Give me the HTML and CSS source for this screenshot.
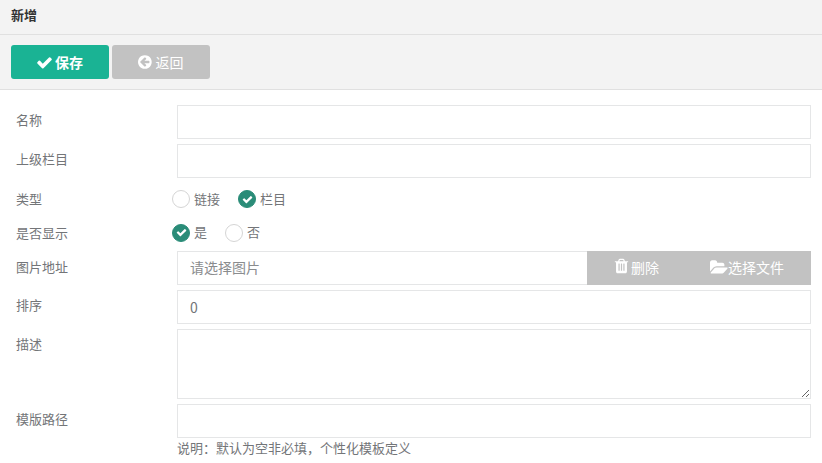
FILE: index.html
```html
<!DOCTYPE html>
<html lang="zh">
<head>
<meta charset="utf-8">
<title>新增</title>
<link rel="stylesheet" href="styles.css">
</head>
<body>
<header class="title-bar">新增</header>
<div class="toolbar">
  <button class="btn btn-save" type="button">
    <svg class="ic ic-check" viewBox="0 0 1792 1792"><path d="M1671 566q0 40-28 68l-724 724-136 136q-28 28-68 28t-68-28l-136-136-362-362q-28-28-28-68t28-68l136-136q28-28 68-28t68 28l294 295 656-657q28-28 68-28t68 28l136 136q28 28 28 68z"/></svg>保存
  </button>
  <button class="btn btn-back" type="button">
    <svg class="ic ic-back" viewBox="0 0 1792 1792"><path d="M1280 960v-128q0-26-19-45t-45-19h-502l189-189q19-19 19-45t-19-45l-91-91q-18-18-45-18t-45 18l-362 362-91 91q-18 18-18 45t18 45l91 91 362 362q18 18 45 18t45-18l91-91q18-18 18-45t-18-45l-189-189h502q26 0 45-19t19-45zm256-64q0 209-103 385.500t-279.500 279.500-385.500 103-385.500-103-279.500-279.500-103-385.500 103-385.500 279.500-279.500 385.500-103 385.500 103 279.500 279.500 103 385.500z"/></svg>返回
  </button>
</div>
<form class="form">
  <div class="row"><label class="lbl">名称</label><input class="field" type="text"></div>
  <div class="row"><label class="lbl">上级栏目</label><input class="field" type="text"></div>
  <div class="row row-radio row-radio-first">
    <label class="lbl">类型</label>
    <div class="radios">
      <span class="radio"><i class="dot"></i><span class="radio-text">链接</span></span>
      <span class="radio"><i class="dot on"><svg viewBox="0 0 1792 1792"><path d="M1671 566q0 40-28 68l-724 724-136 136q-28 28-68 28t-68-28l-136-136-362-362q-28-28-28-68t28-68l136-136q28-28 68-28t68 28l294 295 656-657q28-28 68-28t68 28l136 136q28 28 28 68z"/></svg></i><span class="radio-text">栏目</span></span>
    </div>
  </div>
  <div class="row row-radio">
    <label class="lbl">是否显示</label>
    <div class="radios">
      <span class="radio"><i class="dot on"><svg viewBox="0 0 1792 1792"><path d="M1671 566q0 40-28 68l-724 724-136 136q-28 28-68 28t-68-28l-136-136-362-362q-28-28-28-68t28-68l136-136q28-28 68-28t68 28l294 295 656-657q28-28 68-28t68 28l136 136q28 28 28 68z"/></svg></i><span class="radio-text">是</span></span>
      <span class="radio"><i class="dot"></i><span class="radio-text">否</span></span>
    </div>
  </div>
  <div class="row">
    <label class="lbl lbl-file">图片地址</label>
    <div class="file">
      <input class="field file-input" type="text" placeholder="请选择图片">
      <div class="file-actions">
        <span class="file-btn file-del"><svg class="ic ic-trash" viewBox="0 0 1792 1792"><path d="M704 1376v-704q0-14-9-23t-23-9h-64q-14 0-23 9t-9 23v704q0 14 9 23t23 9h64q14 0 23-9t9-23zm256 0v-704q0-14-9-23t-23-9h-64q-14 0-23 9t-9 23v704q0 14 9 23t23 9h64q14 0 23-9t9-23zm256 0v-704q0-14-9-23t-23-9h-64q-14 0-23 9t-9 23v704q0 14 9 23t23 9h64q14 0 23-9t9-23zm-544-992h448l-48-117q-7-9-17-11h-317q-10 2-17 11zm928 32v64q0 14-9 23t-23 9h-96v948q0 83-47 143.500t-113 60.500h-832q-66 0-113-58.500t-47-141.500v-952h-96q-14 0-23-9t-9-23v-64q0-14 9-23t23-9h309l70-167q15-37 54-63t79-26h320q40 0 79 26t54 63l70 167h309q14 0 23 9t9 23z"/></svg>删除</span>
        <span class="file-btn file-pick"><svg class="ic ic-folder" viewBox="0 0 1920 1792"><path d="M1879 952q0 31-31 66l-336 396q-43 51-120.500 86.500t-143.500 35.500h-1088q-34 0-60.500-13t-26.500-43q0-31 31-66l336-396q43-51 120.500-86.500t143.500-35.500h1088q34 0 60.500 13t26.500 43zm-343-344v160h-832q-94 0-197 47.500t-164 119.500l-337 396-5 6q0-4-.5-12.500t-.5-12.500v-960q0-92 66-158t158-66h320q92 0 158 66t66 158v32h544q92 0 158 66t66 158z"/></svg>选择文件</span>
      </div>
    </div>
  </div>
  <div class="row"><label class="lbl">排序</label><input class="field" type="text" value="0"></div>
  <div class="row"><label class="lbl">描述</label><textarea class="field area"></textarea></div>
  <div class="row row-last">
    <label class="lbl">模版路径</label>
    <div class="stack">
      <input class="field" type="text">
      <p class="hint">说明：默认为空非必填，个性化模板定义</p>
    </div>
  </div>
</form>
</body>
</html>
```

FILE: styles.css
```css
* { box-sizing: border-box; }
html, body { margin: 0; padding: 0; }
body {
  background: #fff;
  color: #737578;
  font-family: "Noto Sans CJK SC", "Open Sans", sans-serif;
  font-size: 13px;
  overflow: hidden;
  height: 463px;
}
.title-bar {
  height: 35px;
  background: #f3f3f3;
  border-bottom: 1px solid #e0e0e0;
  padding: 5px 0 0 11px;
  line-height: 20px;
  font-weight: 700;
  font-size: 13px;
  color: #333;
}
.toolbar {
  height: 55px;
  background: #f3f3f3;
  border-bottom: 1px solid #e0e0e0;
  padding: 10px 0 0 11px;
  display: flex;
  gap: 3px;
}
.btn {
  width: 98px;
  height: 34px;
  border: 0;
  border-radius: 3px;
  color: #fff;
  font: inherit;
  font-size: 14px;
  display: flex;
  align-items: center;
  justify-content: center;
  padding: 0;
}
.btn-save { background: #1ab394; font-weight: 700; }
.btn-back { background: #c2c2c2; }
.ic { fill: currentColor; flex: none; }
.ic-check { width: 17px; height: 17px; margin-right: 2px; margin-left: -1px; }
.ic-back { width: 16px; height: 16px; margin-right: 2px; margin-left: -1px; }
.ic-trash { width: 17px; height: 18px; margin-right: 1px; margin-top: -2px; }
.ic-folder { width: 18px; height: 17px; }
.form { padding: 15px 11px 0 16px; }
.row {
  display: grid;
  grid-template-columns: 161px 1fr;
  margin-bottom: 5px;
}
.lbl { line-height: 30px; }
.lbl-file { line-height: 36px; }
.field {
  display: block;
  width: 100%;
  height: 34px;
  border: 1px solid #e5e6e7;
  background: #fff;
  color: #737578;
  font: inherit;
  font-size: 14px;
  padding: 0 12px;
  outline: 0;
}
.field::placeholder { color: #8a8c8e; opacity: 1; }
.area { height: 70px; padding: 6px 12px; }
.row-radio { height: 33px; margin-bottom: 0; }
.row-radio .lbl { line-height: 33px; }
.row-radio-first { height: 32px; margin-bottom: 1px; }
.row-radio-first .lbl { line-height: 31px; }
.radios {
  display: flex;
  align-items: center;
  margin-left: -5px;
}
.radio { display: flex; align-items: center; margin-right: 18px; }
.radio-text { margin-top: -2px; }
.dot {
  width: 18px;
  height: 18px;
  border-radius: 50%;
  border: 1px solid #d5d5d5;
  background: #fff;
  margin-right: 4px;
  display: flex;
  align-items: center;
  justify-content: center;
}
.dot.on { background: #2a8c78; border-color: #2a8c78; }
.dot svg { width: 11px; height: 11px; fill: #fff; }
.file { display: flex; margin-top: 2px; }
.file-input { flex: 1; min-width: 0; border-right: 0; padding-bottom: 2px; }
.file-actions {
  width: 224px;
  height: 34px;
  background: #c2c2c2;
  color: #fff;
  display: flex;
  font-size: 14px;
  padding-bottom: 2px;
}
.file-btn { display: flex; align-items: center; justify-content: center; }
.file-del { width: 98px; }
.file-pick { width: 124px; }
.stack { min-width: 0; }
.hint { margin: 0; line-height: 19px; }
```
